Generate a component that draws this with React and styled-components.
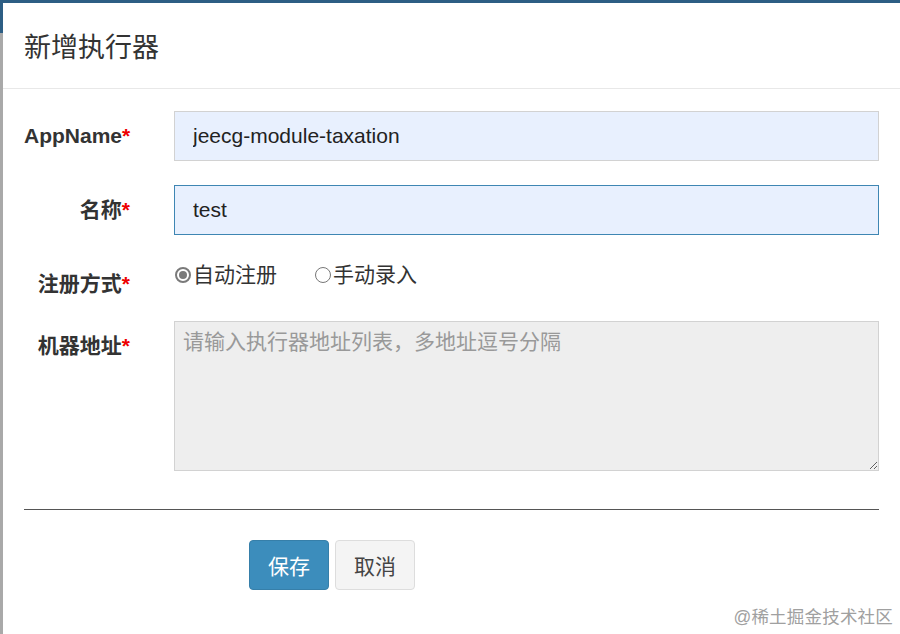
import styled, { createGlobalStyle } from "styled-components";

const GlobalStyle = createGlobalStyle`
  html, body {
    margin: 0;
    padding: 0;
  }
  body {
    font-family: "Liberation Sans", "Noto Sans CJK SC", sans-serif;
    color: #333;
  }
  * { box-sizing: border-box; }
`;

const Backdrop = styled.div`
  height: 634px;
  padding: 3px 0 0 3px;
  background: linear-gradient(#2d5e84 0, #2d5e84 33px, #a9a9a9 33px);
  overflow: hidden;
  position: relative;
`;

const Modal = styled.div`
  background: #fff;
  height: 100%;
  display: flex;
  flex-direction: column;
`;

const Header = styled.div`
  height: 86px;
  padding: 0 21px;
  display: flex;
  align-items: center;
  border-bottom: 1px solid #e8e8e8;
`;

const Title = styled.h4`
  margin: 0;
  font-size: 27px;
  font-weight: normal;
  color: #333;
`;

const Form = styled.form`
  padding: 22px 21px 0;
`;

const Row = styled.div`
  display: grid;
  grid-template-columns: 106px 1fr;
  column-gap: 44px;
  margin-bottom: 24px;
`;

const Label = styled.label`
  text-align: right;
  white-space: nowrap;
  font-size: 21px;
  font-weight: bold;
  line-height: 27px;
  padding-top: 11px;
  color: #333;

  em {
    font-style: normal;
    color: #e00;
  }
`;

const Input = styled.input`
  width: 100%;
  height: 50px;
  padding: 0 18px;
  font: inherit;
  font-size: 21px;
  color: #222;
  background: #e8f0fe;
  border: 1px solid ${(p) => (p.$focused ? "#3e86b3" : "#d2d2d2")};
  outline: none;
`;

const TextArea = styled.textarea`
  width: 100%;
  height: 150px;
  padding: 6px 8px;
  font: inherit;
  font-size: 21px;
  line-height: 28px;
  background: #eee;
  border: 1px solid #d2d2d2;
  outline: none;
  display: block;

  &::placeholder {
    color: #999;
  }
`;

const RadioGroup = styled.div`
  display: flex;
  gap: 37px;
  height: 38px;
  padding-top: 1px;
  align-items: flex-start;
`;

const RadioOption = styled.label`
  display: flex;
  align-items: center;
  gap: 2px;
  font-size: 21px;
  line-height: 30px;
  color: #333;
`;

const RadioDot = styled.span`
  width: 16px;
  height: 16px;
  border-radius: 50%;
  border: ${(p) => (p.$checked ? "2px solid #7a7a7a" : "1px solid #777")};
  background: #fff;
  display: flex;
  align-items: center;
  justify-content: center;
  margin-left: 1px;

  &::after {
    content: "";
    width: 8px;
    height: 8px;
    border-radius: 50%;
    background: ${(p) => (p.$checked ? "#7a7a7a" : "transparent")};
  }
`;

const Divider = styled.hr`
  margin: 38px 0 0;
  border: 0;
  border-top: 1px solid #555;
`;

const Actions = styled.div`
  display: flex;
  gap: 6px;
  padding: 30px 0 0 225px;
`;

const Button = styled.button`
  width: 80px;
  height: 50px;
  font: inherit;
  font-size: 21px;
  border-radius: 4px;
  cursor: pointer;
  border: 1px solid ${(p) => (p.$primary ? "#367fa9" : "#ddd")};
  background: ${(p) => (p.$primary ? "#3c8dbc" : "#f4f4f4")};
  color: ${(p) => (p.$primary ? "#fff" : "#444")};
`;

const Watermark = styled.div`
  position: absolute;
  right: 7px;
  bottom: 6px;
  font-size: 17.5px;
  color: #a0a0a0;
  letter-spacing: 0.2px;
`;

export default function App() {
  return (
    <>
      <GlobalStyle />
      <Backdrop>
        <Modal>
          <Header>
            <Title>新增执行器</Title>
          </Header>
          <Form onSubmit={(e) => e.preventDefault()}>
            <Row>
              <Label>AppName<em>*</em></Label>
              <Input defaultValue="jeecg-module-taxation" />
            </Row>
            <Row>
              <Label>名称<em>*</em></Label>
              <Input defaultValue="test" $focused />
            </Row>
            <Row>
              <Label>注册方式<em>*</em></Label>
              <RadioGroup>
                <RadioOption>
                  <RadioDot $checked />
                  自动注册
                </RadioOption>
                <RadioOption>
                  <RadioDot />
                  手动录入
                </RadioOption>
              </RadioGroup>
            </Row>
            <Row>
              <Label>机器地址<em>*</em></Label>
              <TextArea readOnly placeholder="请输入执行器地址列表，多地址逗号分隔" />
            </Row>
            <Divider />
            <Actions>
              <Button $primary type="submit">保存</Button>
              <Button type="button">取消</Button>
            </Actions>
          </Form>
        </Modal>
        <Watermark>@稀土掘金技术社区</Watermark>
      </Backdrop>
    </>
  );
}
